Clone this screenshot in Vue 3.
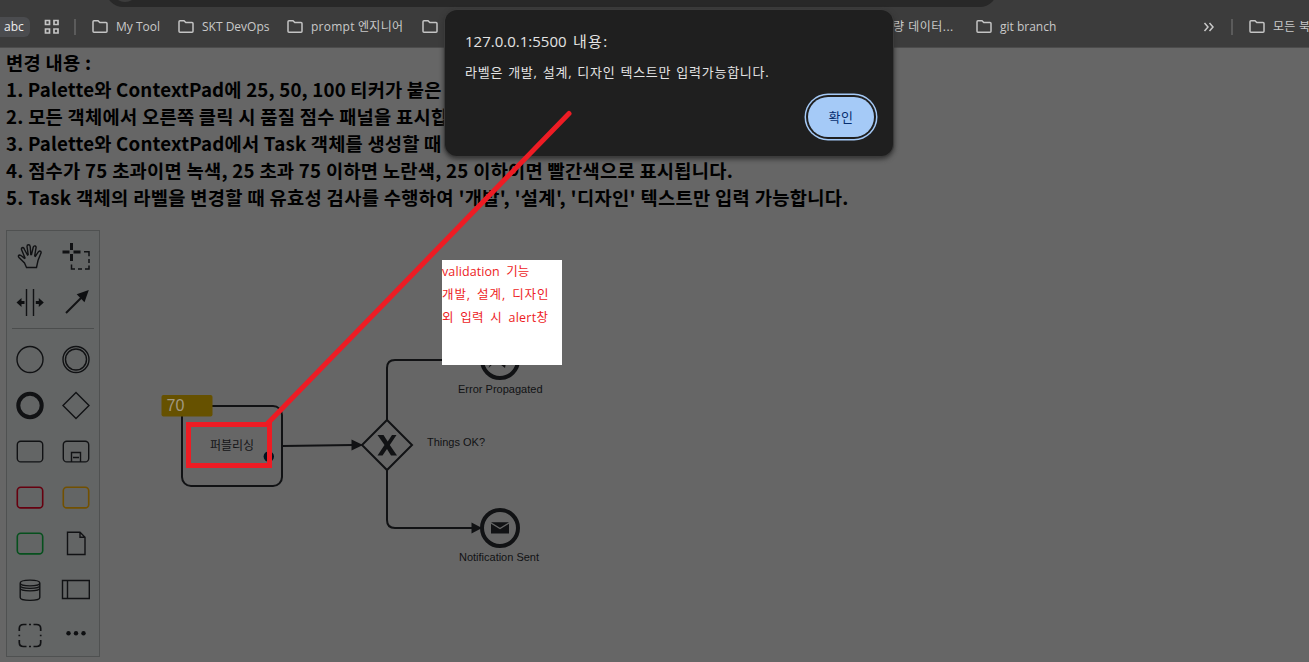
<script setup>
const lines = [
  '변경 내용 :',
  '1. Palette와 ContextPad에 25, 50, 100 티커가 붙은',
  '2. 모든 객체에서 오른쪽 클릭 시 품질 점수 패널을 표시합니다.',
  '3. Palette와 ContextPad에서 Task 객체를 생성할 때',
  '4. 점수가 75 초과이면 녹색, 25 초과 75 이하면 노란색, 25 이하이면 빨간색으로 표시됩니다.',
  "5. Task 객체의 라벨을 변경할 때 유효성 검사를 수행하여 '개발', '설계', '디자인' 텍스트만 입력 가능합니다.",
]
const bookmarks = [
  { t: 'My Tool', c: 'b1' },
  { t: 'SKT DevOps', c: 'b2' },
  { t: 'prompt 엔지니어', c: 'b3' },
  { t: '', c: 'b4' },
]
const tools = ['hand', 'lasso', 'space', 'connect']
const shapes = ['start', 'inter', 'end', 'gateway', 'task', 'sub', 'red', 'yellow', 'green', 'data', 'store', 'pool', 'group', 'more']
const folder = 'M1 3.2V12.2Q1 13.2 2 13.2H14Q15 13.2 15 12.2V4.6Q15 3.6 14 3.6H7.8L6 1.7H2Q1 1.7 1 2.7Z'
</script>

<template>
  <div class="screen">
    <div class="bar">
      <div class="omni"><span></span></div>
      <div class="abc">abc</div>
      <svg class="grid" width="16" height="16" viewBox="0 0 16 16"><path d="M1.5 1.5h4v4h-4zM10 1.5h4v4h-4zM1.5 10h4v4h-4zM10 10h4v4h-4z" /></svg>
      <i class="vr"></i>
      <div v-for="b in bookmarks" :key="b.c" class="bm" :class="b.c">
        <svg width="16" height="15" viewBox="0 0 16 15"><path :d="folder" /></svg><span>{{ b.t }}</span>
      </div>
      <div class="bm data"><span>량 데이터...</span></div>
      <div class="bm git"><svg width="16" height="15" viewBox="0 0 16 15"><path :d="folder" /></svg><span>git branch</span></div>
      <svg class="chev" width="12" height="12" viewBox="0 0 12 12"><path d="M1.5 2L5 6L1.5 10M6.5 2L10 6L6.5 10" /></svg>
      <i class="vr v2"></i>
      <div class="bm all"><svg width="16" height="15" viewBox="0 0 16 15"><path :d="folder" /></svg><span>모든 북</span></div>
    </div>

    <main>
      <h3 v-for="(l, i) in lines" :key="i" :class="'l' + i">{{ l }}</h3>

      <div class="palette">
        <template v-for="n in [...tools, 'sep', ...shapes]" :key="n">
          <hr v-if="n === 'sep'" />
          <svg v-else class="ico" width="46" height="46" viewBox="0 0 46 46">
            <path v-if="n === 'hand'" d="M19.5 36.5L17.5 32L12 26.5Q10.5 24.5 12.5 24Q14 24 17.3 27.3L18 27L14.5 18.5Q14.2 16.5 16 16.5Q17 16.7 17.5 18.5L20.5 24L21.2 23.6L20 15.5Q20 13.8 21.5 13.8Q23 13.8 23.2 15.5L23.8 23.5H24.5L26.3 16Q27 14.5 28.2 15Q29.4 15.5 29 17L27.7 24.8L28.4 25.2L31.5 20.7Q32.6 19.5 33.6 20.3Q34.5 21.2 33.8 22.5L31 29.5L29.5 36.5Z" />
            <g v-else-if="n === 'lasso'"><path class="thick" d="M18.500 12v7M18.500 23v7M9.500 21h7M20.500 21h7" /><path class="dash" d="M31 20.700h5v4.500M36 28v4M36 34.500v3.500h-4M29 38h-4M22 38h-3.500v-4.500" /></g>
            <g v-else-if="n === 'space'"><path d="M19.500 12v27M26.500 12v27" /><path class="fill" d="M9.500 25.500L14.500 21v3h3v3h-3v3zM36.800 25.500L31.800 21v3h-3v3h3v3z" /></g>
            <g v-else-if="n === 'connect'"><path class="w2" d="M13 36L28 21" /><path class="fill" d="M35.800 13L31.500 25.300L23.700 17.300Z" /></g>
            <circle v-else-if="n === 'start'" cx="23" cy="25.500" r="13" />
            <g v-else-if="n === 'inter'"><circle cx="23" cy="25.500" r="13" /><circle cx="23" cy="25.500" r="10.500" /></g>
            <circle v-else-if="n === 'end'" class="w4" cx="23" cy="25.500" r="11.700" />
            <path v-else-if="n === 'gateway'" d="M23 12.500L36 25.500L23 38.500L10 25.500Z" />
            <g v-else-if="['task', 'sub', 'red', 'yellow', 'green'].includes(n)" :class="n">
              <rect x="10.300" y="15.300" width="25.400" height="20.600" rx="3.500" />
              <path v-if="n === 'sub'" d="M18.500 36v-9.500h9V36M20 31.500h6" />
            </g>
            <path v-else-if="n === 'data'" d="M14.500 14.300H27L32 19.300V36.500H14.500ZM27 14.300V19.300H32" />
            <path v-else-if="n === 'store'" d="M13.200 19V33.500C13.200 37.300 32.800 37.300 32.800 33.500V19M13.200 19C13.200 15.200 32.800 15.200 32.800 19C32.800 22.800 13.200 22.800 13.200 19M13.200 21.500C13.200 25.300 32.800 25.300 32.800 21.500M13.200 24C13.200 27.800 32.800 27.800 32.800 24" />
            <path v-else-if="n === 'pool'" d="M9.500 16.500H36.300V34.500H9.500ZM14.500 16.500V34.500" />
            <path v-else-if="n === 'group'" class="grp" d="M19.500 14.500H16.500Q12.300 14.500 12.300 18.500V21M26.500 14.500H29.500Q33.700 14.500 33.700 18.500V21M12.300 30V32.500Q12.300 36.500 16.500 36.500H19.500M33.700 30V32.500Q33.700 36.500 29.500 36.500H26.500M22 14.500h2M12.300 24.700v1.600M33.700 24.700v1.600M22 36.500h2" />
            <g v-else class="fill"><circle cx="15.500" cy="23.300" r="2.200" /><circle cx="23" cy="23.300" r="2.200" /><circle cx="30.500" cy="23.300" r="2.200" /></g>
          </svg>
        </template>
      </div>
    </main>

    <svg class="canvas" width="1309" height="662" viewBox="0 0 1309 662">
      <g class="node">
        <rect x="182" y="406" width="100" height="80" rx="9" />
        <path d="M283 446L353 445M387 420V368Q387 360 395 360H475M387 470V520Q387 528 395 528H472" />
        <path d="M387 420L412 445L387 470L362 445Z" />
        <path class="solid" d="M351.500 439.500L363 445L351.500 450.500ZM471.500 522.500L482 528L471.500 533.500Z" />
        <path class="solid" d="M377.500 435H383.500L387.700 441.500L392 435H396.500L389.800 445L397 455.500H391L387 449L382.500 455.500H377.500L384.500 445Z" />
        <circle class="ring" cx="500" cy="360" r="18" />
        <path class="solid" d="M488.500 368L494 356L503 362L508 352L505 368L496 361Z" />
        <circle class="ring" cx="500" cy="528" r="18" />
        <path class="solid" d="M491 522.300H509L500 527.700ZM491 523.700V533.500H509V523.700L500 529.200Z" />
      </g>
      <rect class="score" x="161.500" y="395" width="51" height="21.500" rx="2" />
      <text class="num" x="166.500" y="411" textLength="18">70</text>
      <text class="ko" x="210" y="450" textLength="44">퍼블리싱</text>
      <circle class="dot" cx="268.800" cy="456.500" r="5.200" />
      <g class="lab">
        <text x="458" y="393" textLength="84.500">Error Propagated</text>
        <text x="427" y="446" textLength="58">Things OK?</text>
        <text x="459" y="561" textLength="80">Notification Sent</text>
      </g>
    </svg>

    <section class="dialog">
      <h2>127.0.0.1:5500 <span>내용:</span></h2>
      <p>라벨은 개발, 설계, 디자인 텍스트만 입력가능합니다.</p>
      <button>확인</button>
    </section>

    <svg class="canvas top" width="1309" height="662" viewBox="0 0 1309 662">
      <rect class="mark" x="188.500" y="424.500" width="81" height="41" />
      <path class="mark" d="M268 423L569 113.500" />
    </svg>
    <aside class="note">
      <div class="n1">validation 기능</div>
      <div class="n2">개발, 설계, 디자인</div>
      <div class="n3">외 입력 시 alert창</div>
    </aside>
  </div>
</template>

<style>
body { margin: 0; overflow: hidden; background: #666; }
</style>
<style scoped>
* { box-sizing: border-box; }
.screen { position: relative; width: 1309px; height: 662px; overflow: hidden; background: #666; font-family: "Open Sans", "Noto Sans CJK KR", sans-serif; }
.bar { position: relative; display: flex; align-items: center; height: 48px; padding-top: 6px; background: #3c3c3c; border-bottom: 1px solid #4c4c4c; color: #c9c9c9; font-size: 12px; overflow: hidden; }
.omni { position: absolute; left: 106px; top: -27px; width: 891px; height: 34px; border-radius: 17px; background: #282828; }
.omni span { position: absolute; left: 6px; top: 3px; width: 26px; height: 26px; border-radius: 13px; background: #3c3c3c; }
.abc { flex: none; width: 30px; height: 20px; padding-left: 4px; border-radius: 0 6px 6px 0; background: #4b4c4f; color: #eee; line-height: 19px; }
.grid { flex: none; margin-left: 14px; fill: none; stroke: #c4c4c4; stroke-width: 1.7; }
.vr { flex: none; width: 2px; height: 16px; margin-left: 14px; background: #5b5b5b; }
.bm { display: flex; flex: none; align-items: center; height: 20px; white-space: nowrap; line-height: 20px; }
.bm svg { flex: none; margin-right: 8px; fill: none; stroke: #c4c4c4; stroke-width: 1.5; }
.b1 { width: 86px; margin-left: 16px; }
.b2 { width: 109px; }
.b3 { width: 135px; letter-spacing: 0.25px; }
.b4 { width: 23px; }
.data { width: 83px; margin-left: 448px; letter-spacing: 0.5px; }
.git { width: 227px; }
.chev { flex: none; fill: none; stroke: #c9c9c9; stroke-width: 1.5; }
.v2 { margin-left: 16px; }
.all { margin-left: 16px; letter-spacing: 0.3px; }
main { padding-left: 6px; }
h3 { margin: 0; height: 27px; color: #000; font: bold 18.72px/28px "Noto Sans CJK KR", sans-serif; white-space: nowrap; letter-spacing: 0.26px; }
.l1 { letter-spacing: 0.17px; }
.l3 { letter-spacing: 0.18px; }
.l5 { letter-spacing: 0.315px; }
.palette { display: flex; flex-wrap: wrap; width: 94px; height: 427px; margin-top: 20px; border: 1px solid #4f5151; background: #636565; }
hr { width: 82px; height: 1px; margin: 5px; border: 0; background: #4b4d4d; }
.ico { display: block; fill: none; stroke: #111214; stroke-width: 1.4; }
.fill { fill: #0e0f11; stroke: none; }
.thick { stroke-width: 3; }
.w2 { stroke-width: 2; }
.w4 { stroke-width: 4; }
.dash { stroke-width: 1.5; }
.grp { stroke-width: 1.7; }
.red { stroke: #66000f; stroke-width: 1.6; }
.yellow { stroke: #725000; stroke-width: 1.6; }
.green { stroke: #06501d; stroke-width: 1.6; }
.canvas { position: absolute; left: 0; top: 0; }
.node { fill: none; stroke: #111214; stroke-width: 2; }
.solid { fill: #111214; stroke: none; }
.ring { stroke-width: 4; }
.score { fill: #665100; }
.num { fill: #a19882; font: 16px "Liberation Sans", sans-serif; }
.ko { fill: #141416; font: 12px "Noto Sans CJK KR", sans-serif; }
.dot { fill: #02131f; }
.lab { fill: #111214; font: 11px "Liberation Sans", Arial, sans-serif; }
.dialog { position: absolute; left: 445px; top: 10px; width: 448px; height: 146px; padding: 20px 20px; border-radius: 12px; background: #1f1f1f; box-shadow: 0 0 0 1px #3b3b3b, 0 2px 5px 1px #303030; color: #e3e3e3; white-space: nowrap; }
h2 { margin: 0; height: 22px; font-weight: 400; font-size: 15px; line-height: 22px; word-spacing: 2.5px; }
h2 span { letter-spacing: 1.3px; }
p { margin: 10px 0 0; font-size: 13px; line-height: 20px; letter-spacing: 0.75px; word-spacing: 0.9px; }
button { position: absolute; right: 19px; top: 87px; width: 66px; height: 40px; padding: 0 0 2px; border: 0; border-radius: 20px; background: #a5caf7; box-shadow: 0 0 0 2px #1f1f1f, 0 0 0 3.500px #a5caf7; color: #062e6f; font: 13px "Noto Sans CJK KR", sans-serif; letter-spacing: 0.5px; }
.mark { fill: none; stroke: #ed1c24; stroke-width: 5; stroke-linecap: round; }
.note { position: absolute; left: 442px; top: 260px; width: 120px; height: 105px; background: #fff; color: #ed1c24; font-size: 12.5px; line-height: 23px; white-space: nowrap; }
.n1 { letter-spacing: 0.1px; word-spacing: 3px; }
.n2 { letter-spacing: 0.9px; word-spacing: 2px; }
.n3 { letter-spacing: 0.25px; word-spacing: 3px; }
</style>
